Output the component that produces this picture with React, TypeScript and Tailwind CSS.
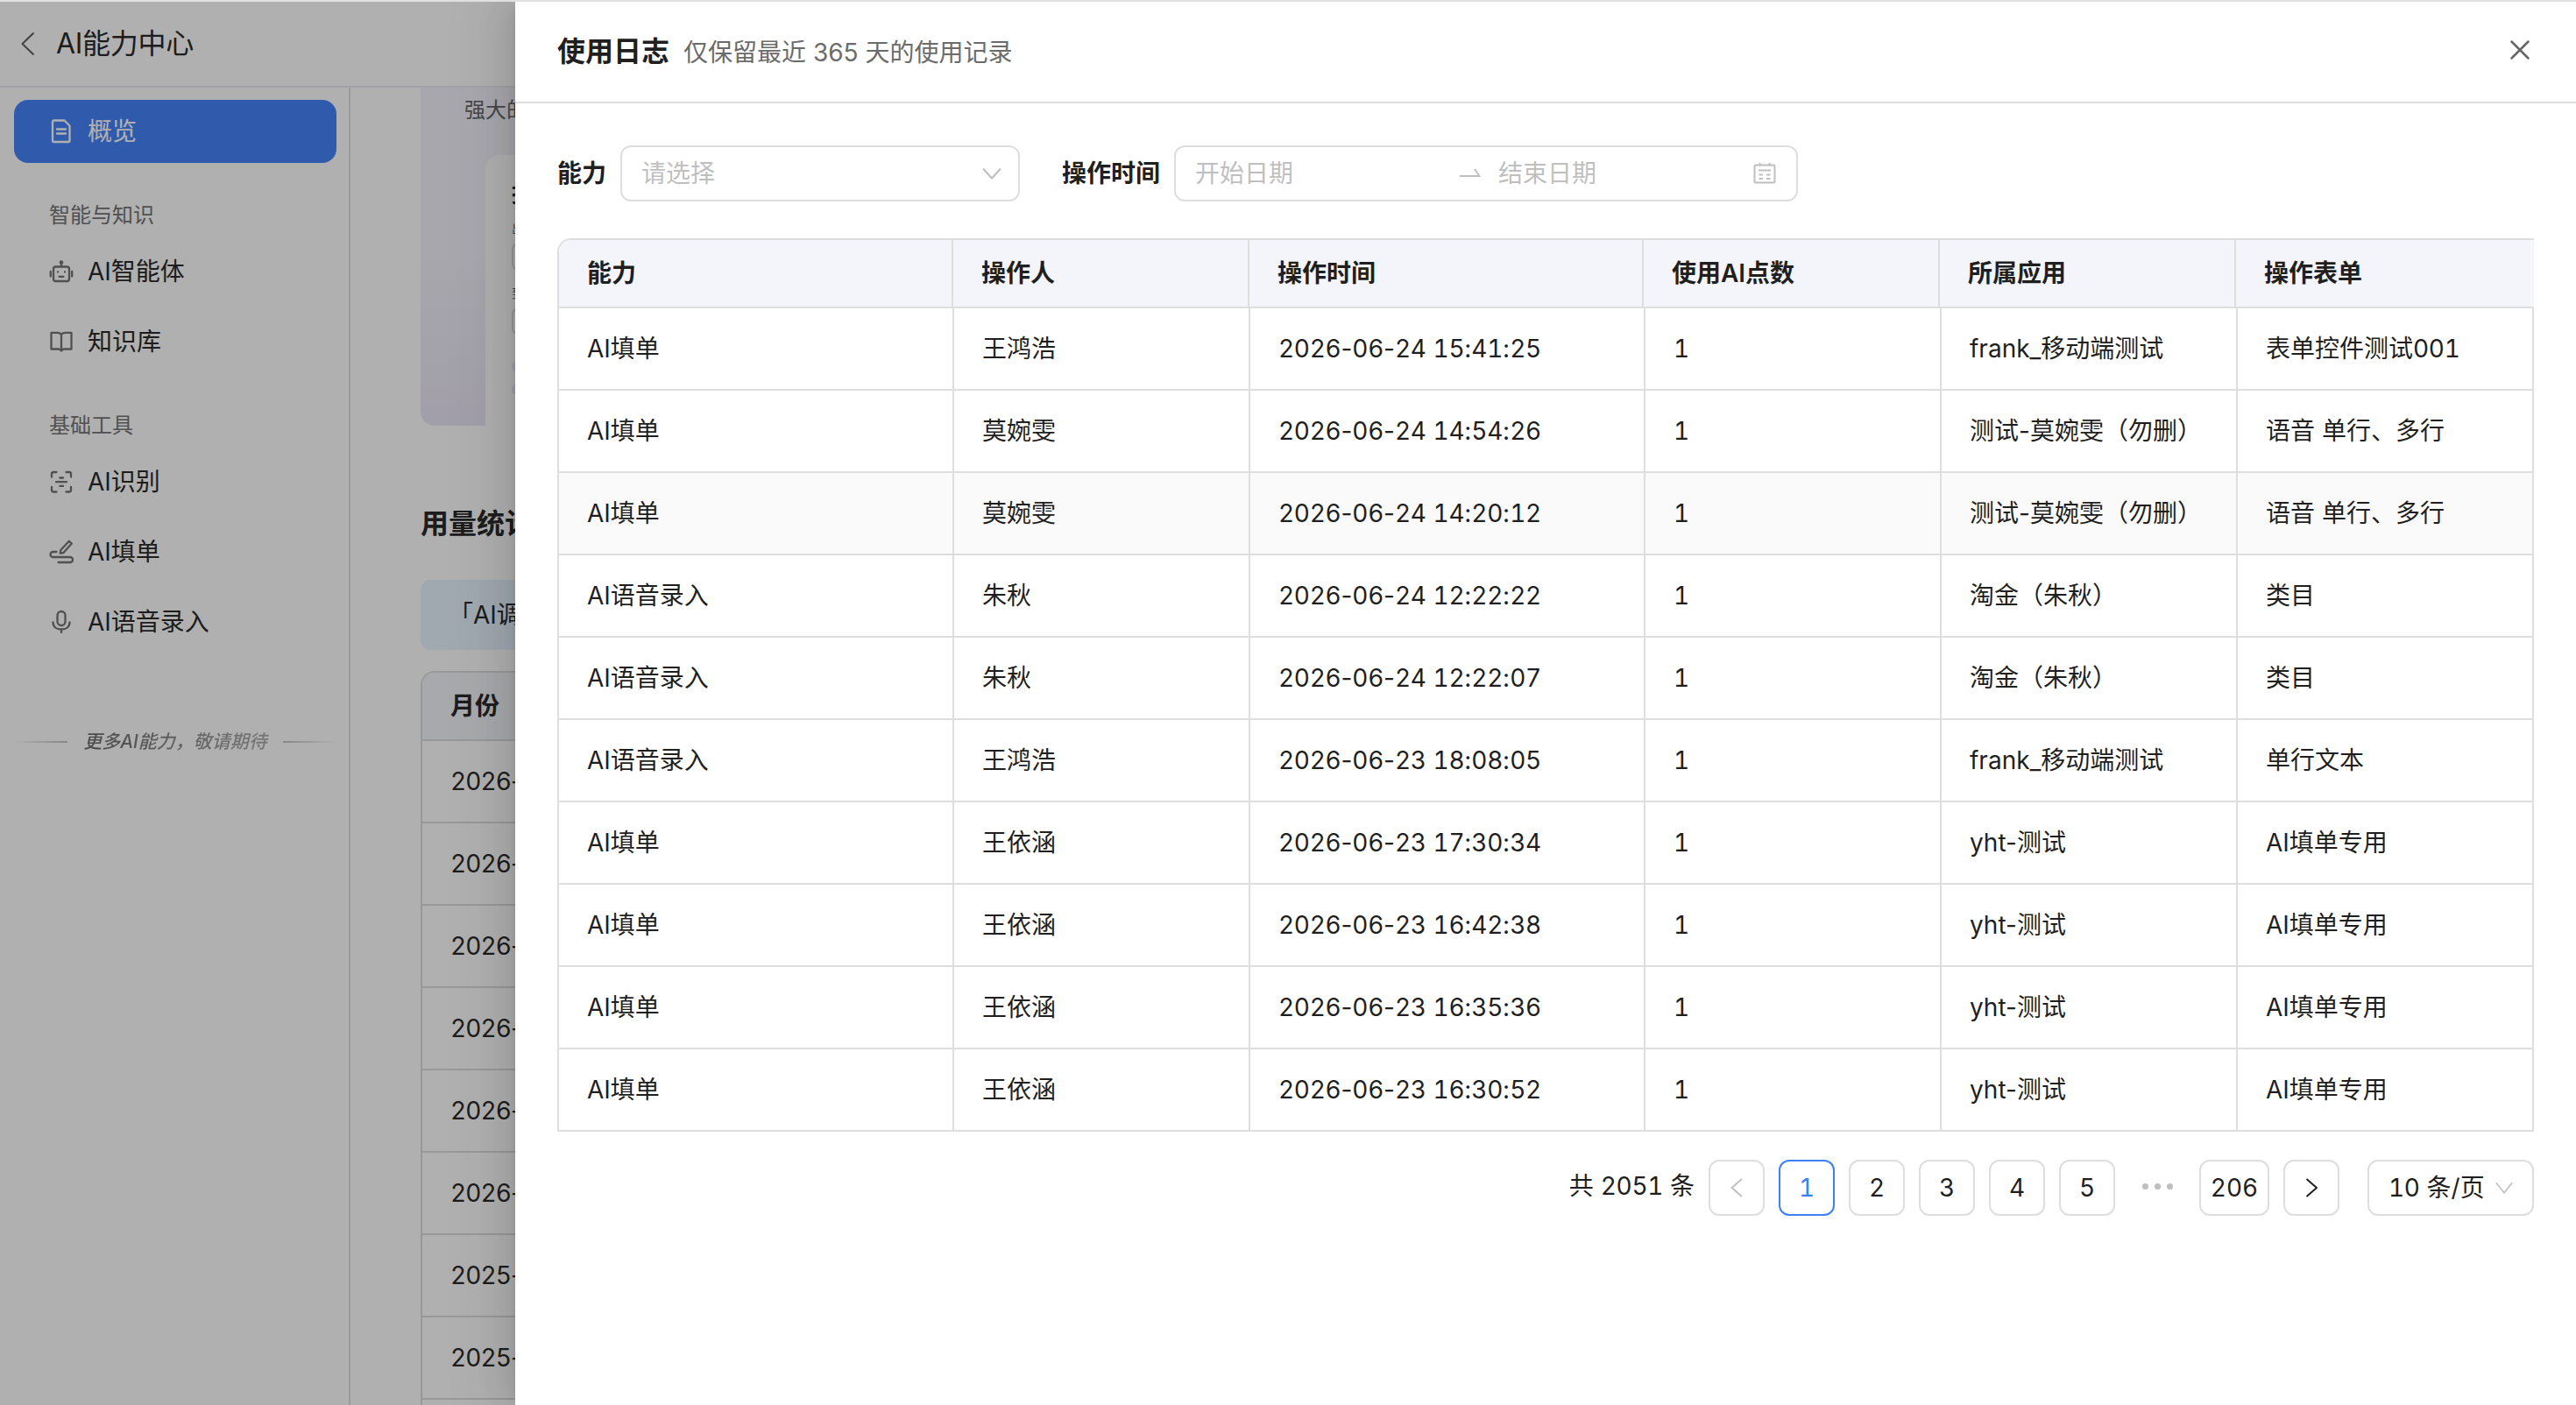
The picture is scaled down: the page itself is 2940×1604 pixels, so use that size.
import { clsx } from 'clsx';
import type { ReactNode } from 'react';

type LogRow = {
  ability: string;
  operator: string;
  time: string;
  points: number;
  app: string;
  form: string;
};

const rows: LogRow[] = [
  { ability: 'AI填单', operator: '王鸿浩', time: '2026-06-24 15:41:25', points: 1, app: 'frank_移动端测试', form: '表单控件测试001' },
  { ability: 'AI填单', operator: '莫婉雯', time: '2026-06-24 14:54:26', points: 1, app: '测试-莫婉雯（勿删）', form: '语音 单行、多行' },
  { ability: 'AI填单', operator: '莫婉雯', time: '2026-06-24 14:20:12', points: 1, app: '测试-莫婉雯（勿删）', form: '语音 单行、多行' },
  { ability: 'AI语音录入', operator: '朱秋', time: '2026-06-24 12:22:22', points: 1, app: '淘金（朱秋）', form: '类目' },
  { ability: 'AI语音录入', operator: '朱秋', time: '2026-06-24 12:22:07', points: 1, app: '淘金（朱秋）', form: '类目' },
  { ability: 'AI语音录入', operator: '王鸿浩', time: '2026-06-23 18:08:05', points: 1, app: 'frank_移动端测试', form: '单行文本' },
  { ability: 'AI填单', operator: '王依涵', time: '2026-06-23 17:30:34', points: 1, app: 'yht-测试', form: 'AI填单专用' },
  { ability: 'AI填单', operator: '王依涵', time: '2026-06-23 16:42:38', points: 1, app: 'yht-测试', form: 'AI填单专用' },
  { ability: 'AI填单', operator: '王依涵', time: '2026-06-23 16:35:36', points: 1, app: 'yht-测试', form: 'AI填单专用' },
  { ability: 'AI填单', operator: '王依涵', time: '2026-06-23 16:30:52', points: 1, app: 'yht-测试', form: 'AI填单专用' },
];

const columns = ['能力', '操作人', '操作时间', '使用AI点数', '所属应用', '操作表单'];

const years = ['2026', '2026', '2026', '2026', '2026', '2026', '2025', '2025'];

// Only the digits are tabular: Inter's tnum also widens hyphens and colons
function Tabular({ text }: { text: string }) {
  return (
    <span className="whitespace-pre">
      {text.split(/(\d+)/).map((part, i) =>
        i % 2 ? (
          <span key={i} className="tabular-nums tracking-[-0.3px]">
            {part}
          </span>
        ) : (
          part
        )
      )}
    </span>
  );
}

/* Icons */

function Icon({ children }: { children: ReactNode }) {
  return (
    <svg
      className="w-7 h-7 shrink-0"
      viewBox="0 0 28 28"
      fill="none"
      stroke="currentColor"
      strokeWidth="2.3"
      strokeLinecap="round"
      strokeLinejoin="round"
    >
      {children}
    </svg>
  );
}

const DocIcon = () => (
  <Icon>
    <path d="M5.500 1.500h12l6 6v17a1.500 1.500 0 0 1-1.500 1.500H5.500A1.500 1.500 0 0 1 4 24.500V3a1.500 1.500 0 0 1 1.500-1.500zM9 11.500h10M9 16.500h10" />
  </Icon>
);

const RobotIcon = () => (
  <Icon>
    <rect x="5" y="8.500" width="18" height="16.500" rx="2.500" />
    <path d="M14 8V4M1.800 14v5.500M26.200 14v5.500M11.500 19.800h5" />
    <circle cx="14" cy="3.500" r="1.200" fill="currentColor" />
    <path d="M10 14.500h.01M18 14.500h.01" />
  </Icon>
);

const BookIcon = () => (
  <Icon>
    <path d="M14 6c-1-1.700-2.500-2.200-4.500-2.200H2.500v18.700H10c2 0 3.400.400 4 2 .600-1.600 2-2 4-2h7.500V3.800h-7C16.500 3.800 15 4.300 14 6zM14 6v18.500" />
  </Icon>
);

const ScanIcon = () => (
  <Icon>
    <path d="M3 8.500v-4A1.500 1.500 0 0 1 4.500 3h4M19.500 3h4A1.500 1.500 0 0 1 25 4.500v4M25 20v4a1.500 1.500 0 0 1-1.500 1.500h-4M8.500 25.500h-4A1.500 1.500 0 0 1 3 24v-4M8 14.200h12M12.300 9.500h3.800M12.300 18.800h3.800" />
  </Icon>
);

const FillIcon = () => (
  <Icon>
    <path d="M22.800 1.800l3 2.700-9.300 10.500-3.700.700.500-3.700zM8.500 14H4.500a3 3 0 0 0 0 6H24a3 3 0 0 1 0 6H10.500" />
  </Icon>
);

const MicIcon = () => (
  <Icon>
    <rect x="9.500" y="2" width="9" height="16" rx="4.500" />
    <path d="M4.500 14.500c0 5 4 8 9.500 8s9.500-3 9.500-8M14 22.500V26" />
  </Icon>
);

function Chevron({ className, d }: { className: string; d: string }) {
  return (
    <svg className={clsx('shrink-0 overflow-visible', className)} viewBox="0 0 24 24" fill="none" stroke="currentColor" strokeWidth="2" strokeLinejoin="round">
      <path d={d} />
    </svg>
  );
}

/* Page behind the drawer */

function NavItem({ icon, label, active }: { icon: ReactNode; label: string; active?: boolean }) {
  return (
    <div
      className={clsx(
        'flex items-center gap-4 ml-4 mr-3.5 px-10 rounded-2xl text-[28px]',
        active ? 'h-[72px] bg-[#4685fb] text-white' : 'h-20 text-[#2a2a2a]'
      )}
    >
      <span className={clsx('flex', !active && 'text-[#757575]')}>{icon}</span>
      <span>{label}</span>
    </div>
  );
}

function Sidebar() {
  return (
    <aside className="w-[400px] shrink-0 border-r-2 border-[#e0e0e0] pt-3.5">
      <NavItem icon={<DocIcon />} label="概览" active />
      <div className="h-12 mt-9 pl-14 text-2xl leading-[48px] text-[#757575]">智能与知识</div>
      <NavItem icon={<RobotIcon />} label="AI智能体" />
      <NavItem icon={<BookIcon />} label="知识库" />
      <div className="h-12 mt-8 pl-14 text-2xl leading-[48px] text-[#757575]">基础工具</div>
      <NavItem icon={<ScanIcon />} label="AI识别" />
      <NavItem icon={<FillIcon />} label="AI填单" />
      <NavItem icon={<MicIcon />} label="AI语音录入" />
      <div className="flex items-center justify-between ml-4 mr-3.5 mt-[81px] h-8">
        <div className="w-[61px] h-0.5 bg-linear-to-r from-transparent to-[#c4c4c4]" />
        <span className="pr-1 -mr-1 text-[21px] italic font-medium whitespace-nowrap bg-linear-to-r from-[#6a6a6a] to-[#b0b0b0] bg-clip-text text-transparent">
          更多AI能力，敬请期待
        </span>
        <div className="w-[61px] h-0.5 bg-linear-to-r from-[#c4c4c4] to-transparent" />
      </div>
    </aside>
  );
}

function Overview() {
  return (
    <main className="w-[200px] shrink-0 pl-20">
      <section className="h-[386px] rounded-bl-2xl overflow-hidden bg-linear-to-b from-[#f2f2fb] via-[#f3f2fb] to-[#eae6f6]">
        <p className="h-[77px] pl-[50px] pt-2 text-2xl leading-9 whitespace-nowrap text-[#666]">强大的</p>
        <div className="ml-[74px] h-[309px] pl-[30px] pt-7 rounded-tl-2xl bg-white">
          <div className="h-8 text-[26px] leading-8 font-semibold text-[#2a2a2a]">报</div>
          <div className="mt-4 h-4 text-sm leading-4 text-[#757575]">出</div>
          <div className="mt-2 h-8 rounded-l-lg border-2 border-r-0 border-[#dedede]" />
          <div className="mt-[18px] h-4 text-sm leading-4 text-[#757575]">到</div>
          <div className="mt-2 h-8 rounded-l-lg border-2 border-r-0 border-[#dedede]" />
          <div className="mt-7 h-3.5 rounded-l-full bg-[#ebe8f8]" />
          <div className="mt-[13px] h-3.5 rounded-l-full bg-[#ebe8f8]" />
        </div>
      </section>
      <h2 className="h-12 mt-[88px] text-[32px] leading-[48px] font-semibold whitespace-nowrap text-[#2a2a2a]">用量统计</h2>
      <div className="h-20 mt-10 pl-8 rounded-l-xl bg-[#e8f3ff] text-[28px] leading-[80px] whitespace-nowrap text-[#2a2a2a]">「AI调</div>
      <div className="mt-6 h-[840px] rounded-tl-2xl border-2 border-r-0 border-b-0 border-[#dcdcdc] overflow-hidden">
        <div className="h-[78px] pl-8 border-b-2 border-[#dcdcdc] bg-[#f4f5fa] text-[28px] leading-[76px] font-semibold text-[#2a2a2a]">月份</div>
        {years.map((year, i) => (
          <div key={i} className="h-[94px] pl-8 border-b-2 border-[#dcdcdc] text-[28px] leading-[92px] tabular-nums tracking-[-0.9px] whitespace-nowrap text-[#2a2a2a]">
            {year}
            <span className="proportional-nums">-</span>
          </div>
        ))}
      </div>
    </main>
  );
}

/* Drawer */

function Filters() {
  return (
    <div className="flex items-center h-16 text-[28px]">
      <span className="w-[72px] font-semibold">能力</span>
      <div className="flex items-center justify-between w-[456px] h-16 pl-[22px] pr-[18px] border-2 border-[#dedede] rounded-xl text-[#bfbfbf]">
        <span>请选择</span>
        <Chevron className="w-6 h-6" d="M2 6.500l10 11 10-11" />
      </div>
      <span className="w-32 ml-12 font-semibold">操作时间</span>
      <div className="flex items-center w-[712px] h-16 pl-[22px] pr-[22px] border-2 border-[#dedede] rounded-xl text-[#bfbfbf]">
        <span className="w-[302px]">开始日期</span>
        <svg className="w-6 h-3" viewBox="0 0 24 12" fill="none" stroke="currentColor" strokeWidth="2">
          <path d="M0 9h22.500L17 1" />
        </svg>
        <span className="ml-5">结束日期</span>
        <svg className="w-7 h-7 ml-auto" viewBox="0 0 28 28" fill="none" stroke="currentColor" strokeWidth="2">
          <rect x="2.500" y="4.500" width="23" height="20" rx="1.500" />
          <path d="M8.500 2v3.500M19.500 2v3.500M7 10.500h14" />
          <path d="M7.500 15.500h4.500M16 15.500h4.500M7.500 20h4.500M16 20h4.500" />
        </svg>
      </div>
    </div>
  );
}

function LogTable() {
  return (
    <div className="mt-[42px] rounded-tl-2xl border-t-2 border-l-2 border-[#dedede] overflow-hidden text-[28px]">
      <div className="grid grid-cols-[450px_338px_450px_338px_338px_338px] h-[78px] bg-[#f4f5fa] border-b-2 border-[#dedede] font-semibold">
        {columns.map((c) => (
          <div key={c} className="pl-8 leading-[76px] border-r-2 border-[#dedede] last:border-[#f9fafd]">
            {c}
          </div>
        ))}
      </div>
      {rows.map((row, i) => (
        <div
          key={row.time}
          className={clsx(
            'grid grid-cols-[451px_338px_451px_338px_338px_338px] h-[94px] border-b-2 border-[#dedede] leading-[92px]',
            i === 2 && 'bg-[#fafafa]'
          )}
        >
          {[row.ability, row.operator, row.time, row.points, row.app, row.form].map((cell, j) => (
            <div key={j} className="pl-8 border-r-2 border-[#dedede]">
              <Tabular text={String(cell)} />
            </div>
          ))}
        </div>
      ))}
    </div>
  );
}

function PageButton({ children, active, wide }: { children: ReactNode; active?: boolean; wide?: boolean }) {
  return (
    <button
      className={clsx(
        'flex items-center justify-center h-16 border-2 rounded-xl tabular-nums',
        wide ? 'w-20' : 'w-16',
        active ? 'border-[#3d7ff7] text-[#3d7ff7]' : 'border-[#dedede]'
      )}
    >
      {children}
    </button>
  );
}

function Pagination() {
  return (
    <div className="flex items-center justify-end gap-4 mt-8 text-[28px]">
      <span className="-mt-1">
        <Tabular text="共 2051 条" />
      </span>
      <PageButton>
        <Chevron className="w-6 h-6 text-[#bfbfbf]" d="M18 2L6.500 12 18 22" />
      </PageButton>
      <PageButton active>1</PageButton>
      {[2, 3, 4, 5].map((n) => (
        <PageButton key={n}>{n}</PageButton>
      ))}
      <div className="flex items-center justify-center gap-[7px] w-16 -mt-1">
        <i className="w-[7px] h-[7px] rounded-full bg-[#bfbfbf]" />
        <i className="w-[7px] h-[7px] rounded-full bg-[#bfbfbf]" />
        <i className="w-[7px] h-[7px] rounded-full bg-[#bfbfbf]" />
      </div>
      <PageButton wide>206</PageButton>
      <PageButton>
        <Chevron className="w-6 h-6" d="M6.500 2l11.500 10L6.500 22" />
      </PageButton>
      <div className="flex items-center justify-between w-[190px] h-16 ml-4 pl-[22px] pr-[22px] border-2 border-[#dedede] rounded-xl">
        <Tabular text="10 条/页" />
        <Chevron className="w-5 h-5 text-[#bfbfbf]" d="M1 5l11 14L23 5" />
      </div>
    </div>
  );
}

function LogDrawer() {
  return (
    <div className="absolute top-0 right-0 w-[2352px] h-full bg-white text-[#1f1f1f] shadow-[-12px_0_32px_0_rgba(0,0,0,0.08),-6px_0_12px_-8px_rgba(0,0,0,0.12),-18px_0_56px_16px_rgba(0,0,0,0.05)]">
      <header className="flex items-center h-[116px] pl-12 pr-[52px] border-b-2 border-[#dedede]">
        <h1 className="text-[32px] font-bold">使用日志</h1>
        <span className="ml-4 mt-0.5 text-[28px] text-[#6b6b6b]">仅保留最近 365 天的使用记录</span>
        <svg className="w-6 h-6 ml-auto mb-1" viewBox="0 0 24 24" fill="none" stroke="#666" strokeWidth="2.500" strokeLinecap="round">
          <path d="M2.500 2.500l19 19M21.500 2.500l-19 19" />
        </svg>
      </header>
      <div className="px-12 pt-12">
        <Filters />
        <LogTable />
        <Pagination />
      </div>
    </div>
  );
}

export default function App() {
  return (
    <div className="w-[2940px] h-[1604px] overflow-hidden border-t-2 border-[#e0e0e0] bg-white font-[Inter,'Noto_Sans_CJK_SC',sans-serif]">
      <div className="relative h-[1602px] overflow-hidden">
        <header className="flex items-center h-[98px] pl-5 border-b-2 border-[#e9e9f2] text-[32px] text-[#2a2a2a]">
          <Chevron className="w-6 h-6 text-[#606060]" d="M18.500-.500L5.500 12l13 12.500" />
          <span className="ml-5 tracking-[-0.3px]">AI能力中心</span>
        </header>
        <div className="flex h-[1504px]">
          <Sidebar />
          <Overview />
        </div>
        {/* Mask */}
        <div className="absolute inset-0 bg-black/31" />
        <LogDrawer />
      </div>
    </div>
  );
}
